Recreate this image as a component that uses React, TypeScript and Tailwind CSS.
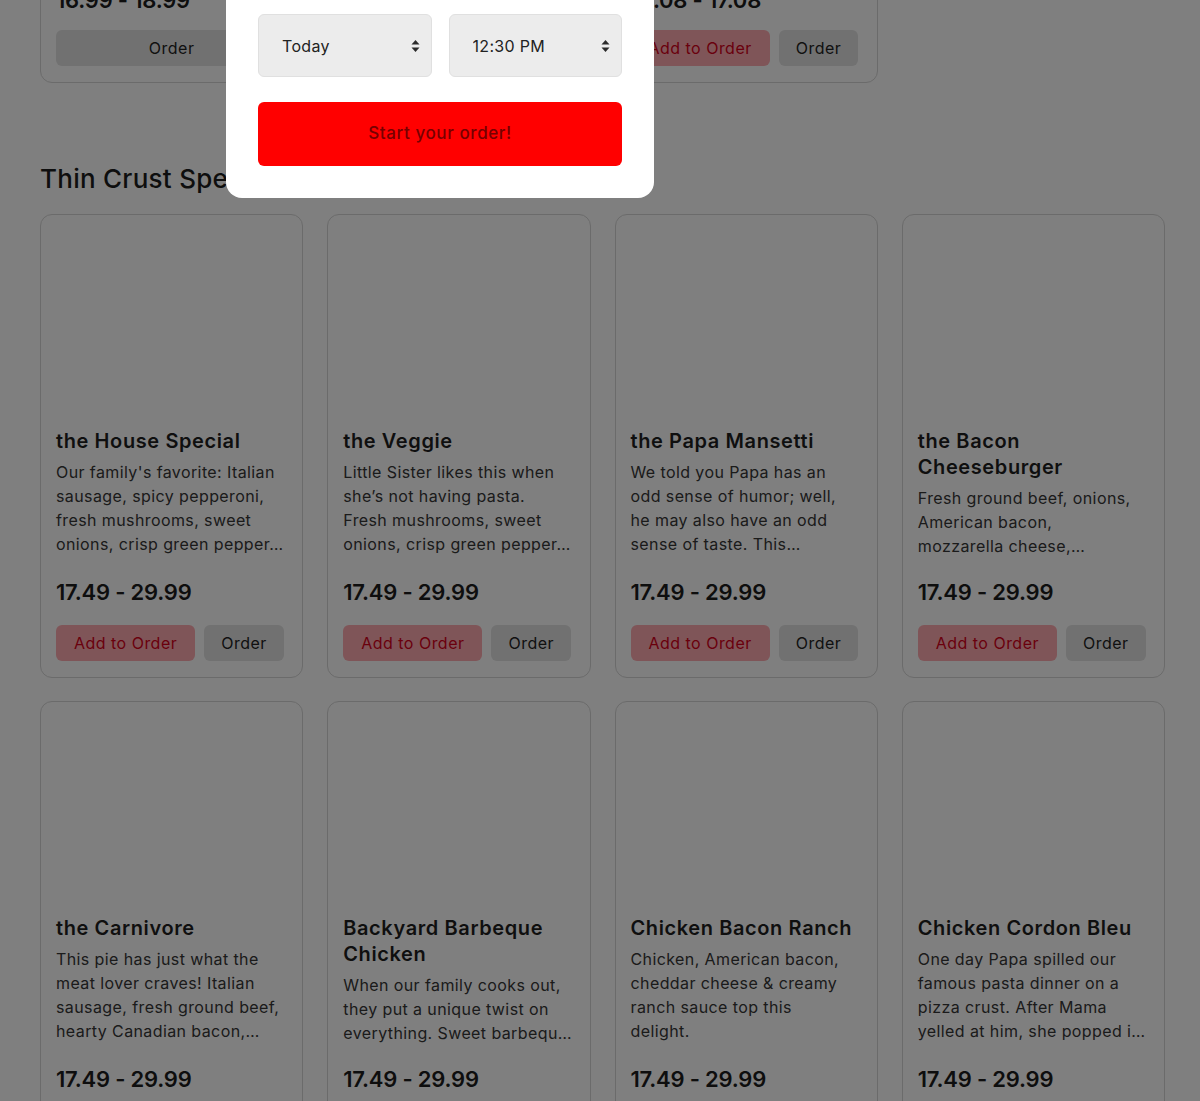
type Pizza = {
  name: string;
  desc: string[];
};

// description lines as the menu shows them, clamped with an ellipsis
const pizzas: Pizza[] = [
  {
    name: 'the House Special',
    desc: ["Our family's favorite: Italian", 'sausage, spicy pepperoni,', 'fresh mushrooms, sweet', 'onions, crisp green pepper…'],
  },
  {
    name: 'the Veggie',
    desc: ['Little Sister likes this when', 'she’s not having pasta.', 'Fresh mushrooms, sweet', 'onions, crisp green pepper…'],
  },
  {
    name: 'the Papa Mansetti',
    desc: ['We told you Papa has an', 'odd sense of humor; well,', 'he may also have an odd', 'sense of taste. This…'],
  },
  {
    name: 'the Bacon Cheeseburger',
    desc: ['Fresh ground beef, onions,', 'American bacon,', 'mozzarella cheese,…'],
  },
  {
    name: 'the Carnivore',
    desc: ['This pie has just what the', 'meat lover craves! Italian', 'sausage, fresh ground beef,', 'hearty Canadian bacon,…'],
  },
  {
    name: 'Backyard Barbeque Chicken',
    desc: ['When our family cooks out,', 'they put a unique twist on', 'everything. Sweet barbequ…'],
  },
  {
    name: 'Chicken Bacon Ranch',
    desc: ['Chicken, American bacon,', 'cheddar cheese & creamy', 'ranch sauce top this', 'delight.'],
  },
  {
    name: 'Chicken Cordon Bleu',
    desc: ['One day Papa spilled our', 'famous pasta dinner on a', 'pizza crust. After Mama', 'yelled at him, she popped i…'],
  },
];

function AddButton() {
  return (
    <button className="h-9 rounded-md bg-[#ffabb0] px-[18px] text-[16px] tracking-[0.03em] text-[#d4001a]">
      Add to Order
    </button>
  );
}

function OrderButton({ wide = false }: { wide?: boolean }) {
  return (
    <button
      className={`h-9 rounded-md bg-[#e2e2e2] px-[17px] text-[16px] tracking-[0.03em] text-[#222] ${wide ? 'w-full' : ''}`}
    >
      Order
    </button>
  );
}

function Price({ value }: { value: string }) {
  return (
    <div className="text-[22px] leading-[30px] font-semibold tracking-[-0.01em] text-[#1c1c1c]">
      {value}
    </div>
  );
}

function PizzaCard({ pizza }: { pizza: Pizza }) {
  return (
    <div className="rounded-xl border border-[#d6d6d6] bg-white px-[15px] py-4">
      {/* image slot, empty in the shot */}
      <div className="mb-4 h-[181px]" />
      <div className="h-[129px]">
        <h3 className="text-[20px] leading-[26px] font-semibold tracking-[0.03em] text-[#1f1f1f]">
          {pizza.name}
        </h3>
        <p className="mt-1.5 text-[16px] leading-6 tracking-[0.025em] text-[#363636]">
          {pizza.desc.map((line) => (
            <span key={line} className="block whitespace-nowrap">
              {line}
            </span>
          ))}
        </p>
      </div>
      <div className="mt-5">
        <Price value="17.49 - 29.99" />
      </div>
      <div className="mt-[18px] flex gap-[9px]">
        <AddButton />
        <OrderButton />
      </div>
    </div>
  );
}

function UpDown() {
  return (
    <svg width="9" height="13" viewBox="0 0 9 13" className="pointer-events-none absolute top-1/2 right-3 -translate-y-1/2">
      <path d="M4.5 0.5 L8.5 5 L0.5 5 Z" fill="#2a2a2a" />
      <path d="M4.5 12.5 L8.5 8 L0.5 8 Z" fill="#2a2a2a" />
    </svg>
  );
}

function OrderModal() {
  return (
    <div className="fixed top-[-26px] left-[226px] z-20 w-[428px] rounded-2xl bg-white px-8 pt-10 pb-8">
      <div className="flex gap-[17px]">
        <div className="relative flex-1">
          <select className="h-[63px] w-full appearance-none rounded-md border border-[#e0e0e0] bg-[#ececec] pl-[23px] text-[16px] tracking-[0.02em] text-[#222] outline-none">
            <option>Today</option>
          </select>
          <UpDown />
        </div>
        <div className="relative flex-1">
          <select className="h-[63px] w-full appearance-none rounded-md border border-[#e0e0e0] bg-[#ececec] pl-[23px] text-[16px] tracking-[0.02em] text-[#222] outline-none">
            <option>12:30 PM</option>
          </select>
          <UpDown />
        </div>
      </div>
      <button className="mt-[25px] h-16 w-full rounded-md bg-[#ff0000] text-[17px] font-medium tracking-[0.035em] text-[#760000]">
        Start your order!
      </button>
    </div>
  );
}

export default function App() {
  return (
    <div className="relative h-[1101px] overflow-hidden bg-white font-['Inter',sans-serif]">
      <div className="-mt-[35px] pr-[35px] pl-10">
        {/* previous section, scrolled mostly out of view */}
        <div className="grid grid-cols-4 gap-6">
          <div className="rounded-xl border border-[#d6d6d6] bg-white px-[15px] pt-[19px] pb-4">
            <Price value="16.99 - 18.99" />
            <div className="mt-[15px] flex">
              <OrderButton wide />
            </div>
          </div>
          <div className="rounded-xl border border-[#d6d6d6] bg-white px-[15px] pt-[19px] pb-4">
            <Price value="16.99 - 18.99" />
            <div className="mt-[15px] flex gap-[9px]">
              <AddButton />
              <OrderButton />
            </div>
          </div>
          <div className="rounded-xl border border-[#d6d6d6] bg-white px-[15px] pt-[19px] pb-4">
            <Price value="13.08 - 17.08" />
            <div className="mt-[15px] flex gap-[9px]">
              <AddButton />
              <OrderButton />
            </div>
          </div>
        </div>

        <h2 className="mt-20 mb-[19px] text-[26px] leading-8 font-medium tracking-[0.01em] text-[#1c1c1c]">
          Thin Crust Specialties
        </h2>

        <div className="grid grid-cols-4 gap-x-6 gap-y-[23px]">
          {pizzas.map((p) => (
            <PizzaCard key={p.name} pizza={p} />
          ))}
        </div>
      </div>

      <div className="fixed inset-0 z-10 bg-black/50" />
      <OrderModal />
    </div>
  );
}
